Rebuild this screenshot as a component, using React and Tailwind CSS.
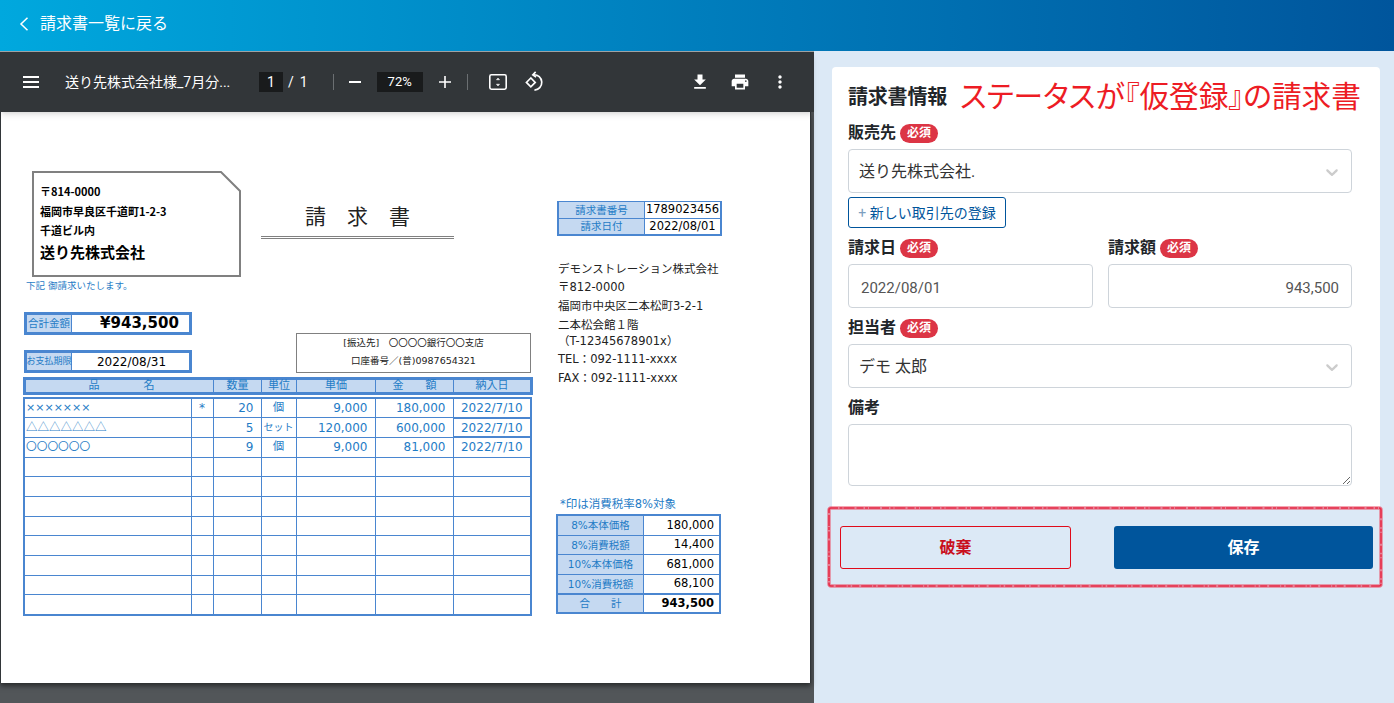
import React from "react";

const ui = { fontFamily: '"Roboto", "Noto Sans CJK JP", sans-serif' };
const doc = { fontFamily: '"DejaVu Sans", "Noto Sans CJK JP", sans-serif' };
const jp = { fontFamily: '"Noto Sans CJK JP", sans-serif' };

const Chevron = () => (
  <svg viewBox="0 0 20 20" className="w-5 h-5 fill-[#cccccc]">
    <path d="M4.516 7.548c0.436-0.446 1.043-0.481 1.576 0l3.908 3.747 3.908-3.747c0.533-0.481 1.141-0.446 1.574 0 0.436 0.445 0.408 1.197 0 1.615-0.406 0.418-4.695 4.502-4.695 4.502-0.217 0.223-0.502 0.335-0.787 0.335s-0.57-0.112-0.789-0.335c0 0-4.287-4.084-4.695-4.502s-0.436-1.17 0-1.615z" />
  </svg>
);

const Req = () => (
  <span className="inline-flex items-center justify-center w-[38px] h-[19px] rounded-full bg-[#dc3545] text-white text-[12px] font-bold leading-none">必須</span>
);

const Label = ({ children, req }) => (
  <div className="flex items-center gap-[4px] h-[20px] mb-[6px] text-[16px] font-bold text-[#212529]">
    <span>{children}</span>
    {req && <Req />}
  </div>
);

const Select = ({ children }) => (
  <div className="flex items-center justify-between h-[44px] pt-[2px] pl-[10px] pr-[9px] bg-white border border-[#ced4da] rounded-[4px] text-[16px] text-[#333333]">
    <span>{children}</span>
    <Chevron />
  </div>
);

const Toolbar = () => (
  <div className="flex items-center h-[60px] bg-[#323639] text-white text-[14px] shrink-0 shadow-md relative z-10">
    <svg viewBox="0 0 24 24" className="ml-[19px] w-6 h-6 fill-white"><path d="M4 18h16v-2H4v2zm0-5h16v-2H4v2zm0-7v2h16V6H4z" /></svg>
    <span className="ml-[22px] w-[168px] whitespace-nowrap">送り先株式会社様_7月分...</span>
    <span className="ml-[26px] flex items-center justify-center w-[24px] h-[20px] bg-[#191b1c] text-[14px]">1</span>
    <span className="ml-[5px]">/</span>
    <span className="ml-[6px] text-[14px]">1</span>
    <span className="ml-[25px] w-px h-[16px] bg-[#6b6f72]" />
    <span className="ml-[15px] w-[12px] h-[2px] bg-white" />
    <span className="ml-[16px] flex items-center justify-center w-[46px] h-[20px] bg-[#191b1c] text-[13px]">72%</span>
    <svg viewBox="0 0 14 14" className="ml-[15px] w-[14px] h-[14px] fill-white"><path d="M6.2 1h1.6v5.2H13v1.6H7.8V13H6.2V7.8H1V6.2h5.2z" /></svg>
    <span className="ml-[15px] w-px h-[16px] bg-[#6b6f72]" />
    <svg viewBox="0 0 22 22" className="ml-[19px] w-[22px] h-[22px] fill-none stroke-white">
      <rect x="2.8" y="3.8" width="16.4" height="14.4" rx="1.6" strokeWidth="1.6" />
      <path d="M9.4 8.8 11 7 12.6 8.8zM9.4 13.2 11 15 12.6 13.2z" className="fill-white" strokeWidth="0.5" />
    </svg>
    <svg viewBox="0 0 20 20" className="ml-[15px] w-[22px] h-[22px] fill-none stroke-white" strokeWidth="1.5">
      <path d="M8.8 3.4A7 7 0 1 1 9.5 17.4" />
      <path d="M10.6 0.8 8 3.5 11 5.6" />
      <path d="M6.2 6.4 2.2 10.4 6.2 14.4 10.2 10.4z" />
    </svg>
    <svg viewBox="0 0 24 24" className="ml-auto w-5 h-5 fill-white"><path d="M19 9h-4V3H9v6H5l7 7 7-7zM5 18v2h14v-2H5z" /></svg>
    <svg viewBox="0 0 24 24" className="ml-[20px] w-5 h-5 fill-white"><path d="M19 8H5c-1.66 0-3 1.34-3 3v6h4v4h12v-4h4v-6c0-1.66-1.34-3-3-3zm-3 11H8v-5h8v5zm3-7c-.55 0-1-.45-1-1s.45-1 1-1 1 .45 1 1-.45 1-1 1zm-1-9H6v4h12V3z" /></svg>
    <svg viewBox="0 0 24 24" className="ml-[20px] mr-[24px] w-5 h-5 fill-white"><path d="M12 8c1.1 0 2-.9 2-2s-.9-2-2-2-2 .9-2 2 .9 2 2 2zm0 2c-1.1 0-2 .9-2 2s.9 2 2 2 2-.9 2-2-.9-2-2-2zm0 6c-1.1 0-2 .9-2 2s.9 2 2 2 2-.9 2-2-.9-2-2-2z" /></svg>
  </div>
);

const items = [
  { name: "×××××××", nameClass: "text-[11px]", mark: "*", qty: "20", unit: "個", price: "9,000", amount: "180,000", date: "2022/7/10" },
  { name: "△△△△△△△", nameClass: "text-[11.5px] [font-family:'Noto_Sans_CJK_JP']", mark: "", qty: "5", unit: "セット", price: "120,000", amount: "600,000", date: "2022/7/10" },
  { name: "〇〇〇〇〇〇", nameClass: "text-[10.7px] [font-family:'Noto_Sans_CJK_JP']", mark: "", qty: "9", unit: "個", price: "9,000", amount: "81,000", date: "2022/7/10" },
  ...Array.from({ length: 8 }, () => ({ name: "", nameClass: "", mark: "", qty: "", unit: "", price: "", amount: "", date: "" })),
];

const Cols = () => (
  <colgroup>
    <col className="w-[167px]" />
    <col className="w-[22px]" />
    <col className="w-[48px]" />
    <col className="w-[35px]" />
    <col className="w-[79px]" />
    <col className="w-[78px]" />
    <col className="w-[78px]" />
  </colgroup>
);

const th = "border-x border-[#4a86d0] font-normal p-0 pb-[1px] leading-none text-center";
const td = "border border-[#4a86d0] p-0 leading-none";

const ItemsTable = () => (
  <div className="text-[#1f7cc6] -ml-px">
    <table className="table-fixed w-[507px] h-[16px] border-collapse border-[3px] border-[#4a86d0] bg-[#c5d9f1] text-[11px]">
      <Cols />
      <tbody>
        <tr>
          <th colSpan={2} className={th + " pl-[4px]"}>品　　　　名</th>
          <th className={th}>数量</th>
          <th className={th}>単位</th>
          <th className={th}>単価</th>
          <th className={th}>金　　額</th>
          <th className={th}>納入日</th>
        </tr>
      </tbody>
    </table>
    <table className="mt-[2px] table-fixed w-[507px] border-collapse border-2 border-[#4a86d0] text-[12px]">
      <Cols />
      <tbody>
        {items.map((r, i) => (
          <tr key={i} className="h-[19.7px]">
            <td className={td + " pl-[1px] pb-[1px] whitespace-nowrap " + r.nameClass}>{r.name}</td>
            <td className={td + " text-center"}>{r.mark}</td>
            <td className={td + " text-right pr-[7px]"}>{r.qty}</td>
            <td className={td + " text-center " + (r.unit === "セット" ? "text-[10px]" : "text-[11.5px]")}>{r.unit}</td>
            <td className={td + " text-right pr-[7px]"}>{r.price}</td>
            <td className={td + " text-right pr-[7px]"}>{r.amount}</td>
            <td className={td + " text-center " + (i < 2 ? "border-b-2" : "")}>{r.date}</td>
          </tr>
        ))}
      </tbody>
    </table>
  </div>
);

const InfoBox = ({ label, labelClass, children, valueClass, h }) => (
  <div className={"flex border-[3px] border-[#4a86d0] " + h}>
    <div className={"flex items-center justify-center w-[45px] bg-[#c5d9f1] text-[#1f7cc6] border-r border-[#4a86d0] whitespace-nowrap " + labelClass}>{label}</div>
    <div className={"flex-1 flex items-center justify-center text-black " + valueClass}>{children}</div>
  </div>
);

const taxRows = [
  ["8%本体価格", "180,000"],
  ["8%消費税額", "14,400"],
  ["10%本体価格", "681,000"],
  ["10%消費税額", "68,100"],
];

const Paper = () => (
  <div className="flex w-[809px] h-[571px] ml-px bg-white pl-[23px] pt-[59px] shrink-0 text-black" style={doc}>
    <div className="w-[507px]">
      <div className="flex">
        <div className="relative ml-[8px] w-[209px] h-[106px] pl-[8px] pt-[11px]">
          <svg viewBox="0 0 209 106" className="absolute inset-0 w-full h-full fill-white stroke-[#808080]" strokeWidth="2">
            <path d="M1 1H189L208 20V105H1Z" />
          </svg>
          <div className="relative font-bold text-[11px]" style={jp}>
            <div className="h-[20px] leading-[18px]">〒814-0000</div>
            <div className="h-[19px] leading-[18px]">福岡市早良区千道町1-2-3</div>
            <div className="h-[20px] leading-[18px]">千道ビル内</div>
            <div className="text-[15px] leading-[22px]">送り先株式会社</div>
          </div>
        </div>
        <div className="ml-[20px] w-[193px] h-[68px] pt-[32px] border-b-[3px] border-double border-[#808080] text-center text-[21px] leading-[28px] text-[#222222]">
          請　求　書
        </div>
      </div>
      <div className="ml-[2px] mt-[3px] h-[12px] text-[9.5px] leading-[12px] text-[#1f7cc6]">下記 御請求いたします。</div>
      <div className="flex justify-between mt-[20px] mb-[4px] h-[61px]">
        <div className="flex flex-col justify-between w-[168px]">
          <InfoBox h="h-[23px]" label="合計金額" labelClass="text-[10.5px]" valueClass="font-bold text-[15px] pl-[18px]">¥943,500</InfoBox>
          <InfoBox h="h-[23px]" label="お支払期限" labelClass="text-[9px]" valueClass="text-[12px] pl-[2px]">2022/08/31</InfoBox>
        </div>
        <div className="self-end flex flex-col justify-center items-center w-[235px] h-[40px] pb-[3px] border border-[#808080] text-[9.5px] text-[#222222] gap-[9px] leading-none">
          <div>[振込先]　〇〇〇〇銀行〇〇支店</div>
          <div>口座番号／(普)0987654321</div>
        </div>
      </div>
      <ItemsTable />
    </div>
    <div className="ml-[26px] w-[165px] pt-[30px]">
      <div className="grid grid-cols-[86px_1fr] border-2 border-t border-[#4a86d0] h-[35px] text-[11.5px] leading-none">
        <div className="flex items-center justify-center bg-[#c5d9f1] text-[#1f7cc6] text-[10.5px] border-r border-b border-[#4a86d0]">請求書番号</div>
        <div className="flex items-center justify-center border-b border-[#4a86d0]">1789023456</div>
        <div className="flex items-center justify-center bg-[#c5d9f1] text-[#1f7cc6] text-[10.5px] border-r border-[#4a86d0]">請求日付</div>
        <div className="flex items-center justify-center">2022/08/01</div>
      </div>
      <div className="mt-[24px] ml-[1px] text-[11.5px] text-[#222222] whitespace-nowrap">
        <div className="h-[18px] leading-[18px]">デモンストレーション株式会社</div>
        <div className="h-[19px] leading-[18px]">〒812-0000</div>
        <div className="h-[19px] leading-[19px]">福岡市中央区二本松町3-2-1</div>
        <div className="h-[15px] leading-[19px]">二本松会館１階</div>
        <div className="h-[19px] leading-[21px]">（T-12345678901x）</div>
        <div className="h-[19px] leading-[19px]">TEL：092-1111-xxxx</div>
        <div className="h-[19px] leading-[19px]">FAX：092-1111-xxxx</div>
      </div>
      <div className="mt-[108px] ml-[3px] h-[16px] leading-[16px] text-[11.5px] text-[#1f7cc6] whitespace-nowrap">*印は消費税率8%対象</div>
      <div className="mt-[2px] -ml-[1px] w-[165px] border-2 border-[#4a86d0] text-[12px] leading-none">
        {taxRows.map((r) => (
          <div key={r[0]} className="grid grid-cols-[86px_1fr] h-[19.5px] border-b border-[#4a86d0]">
            <div className="flex items-center justify-center bg-[#c5d9f1] text-[#1f7cc6] text-[10.5px] border-r border-[#4a86d0]">{r[0]}</div>
            <div className="flex items-center justify-end pr-[5px] text-[11.5px]">{r[1]}</div>
          </div>
        ))}
        <div className="grid grid-cols-[86px_1fr] h-[18px] border-t border-[#4a86d0]">
          <div className="flex items-center justify-center bg-[#c5d9f1] text-[#1f7cc6] text-[10.5px] border-r border-[#4a86d0]">合　　計</div>
          <div className="flex items-center justify-end pr-[5px] font-bold text-[11.5px]">943,500</div>
        </div>
      </div>
    </div>
  </div>
);

const Form = () => (
  <div className="mt-[16px] ml-[18px] w-[548px] h-[440px] bg-white rounded-t-[4px] px-[16px] pt-[14px]">
    <div className="flex items-center h-[32px] mb-[10px] whitespace-nowrap">
      <span className="text-[20px] font-bold text-[#212529] -tracking-[0.2px] leading-none">請求書情報</span>
      <span className="ml-[13px] text-[29.7px] text-[#ed1c24] leading-none [font-feature-settings:'palt']">ステータスが『仮登録』の請求書</span>
    </div>
    <div className="w-[504px]">
      <Label req>販売先</Label>
      <Select>送り先株式会社.</Select>
      <button className="block mt-[4px] w-[158px] h-[31px] pt-[1px] border border-[#00559c] rounded-[3px] text-[14px] text-[#00559c] whitespace-nowrap">
        <span className="text-[#7d9fc0]">+</span> 新しい取引先の登録
      </button>
      <div className="mt-[10px] flex gap-[15px]">
        <div className="w-[245px]">
          <Label req>請求日</Label>
          <input readOnly value="2022/08/01" className="w-full h-[44px] px-[12px] pt-[4px] border border-[#ced4da] rounded-[4px] text-[15px] text-[#555555] outline-none" />
        </div>
        <div className="w-[244px]">
          <Label req>請求額</Label>
          <input readOnly value="943,500" className="w-full h-[44px] px-[12px] pt-[4px] border border-[#ced4da] rounded-[4px] text-[15px] text-right text-[#555555] outline-none" />
        </div>
      </div>
      <div className="mt-[10px]">
        <Label req>担当者</Label>
        <Select>デモ 太郎</Select>
      </div>
      <div className="mt-[10px]">
        <Label>備考</Label>
        <textarea readOnly className="block w-full h-[62px] border border-[#ced4da] rounded-[4px] outline-none" />
      </div>
    </div>
  </div>
);

export default function App() {
  return (
    <div className="relative flex flex-col h-[703px] overflow-hidden bg-[#dce9f6]" style={ui}>
      <header className="flex items-center h-[51px] pb-[4px] bg-gradient-to-r from-[#00a8de] to-[#00559c] text-white text-[16px] shrink-0">
        <svg viewBox="0 0 10 14" className="ml-[19px] w-[10px] h-[14px] fill-none stroke-white" strokeWidth="1.5">
          <path d="M8.5 0.8 2 7l6.5 6.2" />
        </svg>
        <span className="ml-[11px]">請求書一覧に戻る</span>
      </header>
      <div className="flex flex-1 min-h-0">
        <div className="flex flex-col w-[814px] shrink-0 bg-[#525659] border-t border-[#a0a3a5]">
          <Toolbar />
          <div className="w-[811px] bg-[#323639] shadow-[0_3px_5px_rgba(0,0,0,0.5)]">
            <Paper />
          </div>
        </div>
        <div className="flex-1 min-w-0">
          <Form />
          <div className="flex ml-[26px] mt-[19px] gap-[43px]">
            <button className="w-[231px] h-[43px] border border-[#e00b1a] rounded-[3px] text-[#c9101e] text-[16px] font-bold">破棄</button>
            <button className="w-[259px] h-[43px] rounded-[3px] bg-[#00559c] text-white text-[16px] font-bold">保存</button>
          </div>
        </div>
      </div>
      <svg viewBox="0 0 556 82" className="absolute left-[827px] top-[506px] w-[556px] h-[82px] fill-none pointer-events-none">
        <rect x="2" y="2" width="552" height="78" rx="2" stroke="#ec4a63" strokeOpacity="0.65" strokeWidth="3.5" />
        <rect x="2" y="2" width="552" height="78" rx="2" stroke="#e62e4a" strokeWidth="1.6" strokeDasharray="7 1.5 3 1 11 2" />
      </svg>
    </div>
  );
}
